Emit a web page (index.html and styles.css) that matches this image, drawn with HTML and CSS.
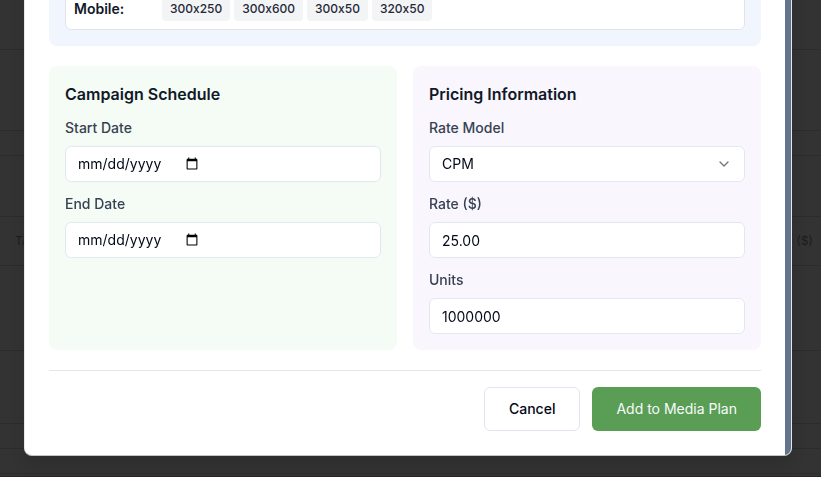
FILE: index.html
```html
<!DOCTYPE html>
<html lang="en">
<head>
<meta charset="utf-8">
<meta name="viewport" content="width=device-width, initial-scale=1">
<title>Add to Media Plan</title>
<link rel="stylesheet" href="styles.css">
</head>
<body>
<div class="page" aria-hidden="true">
  <div class="row row-first"></div>
  <div class="row row-tall"></div>
  <div class="row row-strip"></div>
  <div class="row row-gap"></div>
  <div class="row row-head"><span>TA</span><span>($)</span></div>
  <div class="row row-body"></div>
  <div class="row row-foot"></div>
  <div class="row row-strip"></div>
  <div class="row row-strip"></div>
  <div class="row row-last"></div>
</div>

<div class="overlay">
  <div class="modal" role="dialog" aria-label="Add to Media Plan">
    <form class="content">
      <section class="panel panel-blue">
        <div class="sizes">
          <span class="device">Mobile:</span>
          <ul class="chips">
            <li>300x250</li>
            <li>300x600</li>
            <li>300x50</li>
            <li>320x50</li>
          </ul>
        </div>
      </section>

      <div class="columns">
        <section class="panel panel-green">
          <h2>Campaign Schedule</h2>
          <div class="field">
            <label for="start">Start Date</label>
            <input class="control" id="start" type="date">
          </div>
          <div class="field">
            <label for="end">End Date</label>
            <input class="control" id="end" type="date">
          </div>
        </section>
        <section class="panel panel-purple">
          <h2>Pricing Information</h2>
          <div class="field">
            <label for="model">Rate Model</label>
            <div class="select">
              <select class="control" id="model"><option>CPM</option></select>
              <svg class="chevron" viewBox="0 0 24 24" width="16" height="16" aria-hidden="true"><path d="m6 9 6 6 6-6"/></svg>
            </div>
          </div>
          <div class="field">
            <label for="rate">Rate ($)</label>
            <input class="control" id="rate" type="number" step="0.01" value="25.00">
          </div>
          <div class="field">
            <label for="units">Units</label>
            <input class="control" id="units" type="number" value="1000000">
          </div>
        </section>
      </div>

      <div class="actions">
        <button class="btn" type="button">Cancel</button>
        <button class="btn btn-primary" type="submit">Add to Media Plan</button>
      </div>
    </form>
    <div class="scrollbar"></div>
  </div>
</div>
</body>
</html>
```
FILE: styles.css
```css
* { box-sizing: border-box; }

body {
  margin: 0;
  height: 100vh;
  overflow: hidden;
  background: #333333;
  color: #020817;
  font-family: Inter, "Liberation Sans", sans-serif;
  font-size: 14px;
  line-height: 20px;
}

.page { display: flex; flex-direction: column; }
.row { border-bottom: 1px solid #2c2c2c; }
.row-first { height: 50px; }
.row-tall { height: 81px; }
.row-strip { height: 25px; }
.row-gap { height: 61px; }
.row-head {
  height: 49px;
  display: flex;
  align-items: center;
  justify-content: space-between;
  padding: 0 8px 0 15px;
  color: #1c1d20;
  font-size: 12px;
}
.row-body { height: 85px; }
.row-foot { height: 73px; }
.row-last { height: 3px; border-color: #2f2023; }

.overlay {
  position: fixed;
  inset: 0;
  display: flex;
  align-items: flex-end;
  padding: 0 29px 21px 24px;
}
.modal {
  flex: 1;
  display: flex;
  overflow: hidden;
  background: #ffffff;
  border: 1px solid #e2e8f0;
  border-bottom-color: #c4c4c4;
  border-radius: 8px;
  box-shadow: 0 10px 15px rgba(0, 0, 0, 0.1);
}
.scrollbar { width: 6px; background: #64748b; }
.content {
  flex: 1;
  display: flex;
  flex-direction: column;
  gap: 20px;
  padding: 24px;
}

.panel {
  display: flex;
  flex-direction: column;
  gap: 12px;
  padding: 16px;
  border-radius: 8px;
}
.panel-blue { background: #f0f5fe; }
.panel-green { background: #f4fcf5; }
.panel-purple { background: #f9f6fe; }

.sizes {
  display: flex;
  align-items: center;
  gap: 8px;
  padding: 8px;
  background: #ffffff;
  border: 1px solid #e2e4ea;
  border-radius: 6px;
}
.device { width: 80px; font-weight: 600; color: #111827; }
.chips {
  display: flex;
  gap: 4px;
  margin: 0;
  padding: 0;
  list-style: none;
}
.chips li {
  padding: 2px 8px;
  background: #f3f4f6;
  border-radius: 4px;
  color: #1f2937;
  font-size: 12px;
  font-weight: 500;
  font-variant-ligatures: no-contextual;
}

.columns {
  display: grid;
  grid-template-columns: 1fr 1fr;
  gap: 16px;
}
h2 {
  margin: 0;
  color: #111827;
  font-size: 16px;
  font-weight: 600;
  line-height: 24px;
}
.field { display: flex; flex-direction: column; gap: 8px; }
label { color: #374151; font-weight: 500; }

.control {
  display: flex;
  width: 100%;
  height: 36px;
  margin: 0;
  padding: 0 12px;
  background: #ffffff;
  border: 1px solid #e2e8f0;
  border-radius: 6px;
  color: #020817;
  font: inherit;
  appearance: none;
}
.control::-webkit-inner-spin-button { display: none; }
.control::-webkit-datetime-edit { flex: none; }
.control::-webkit-datetime-edit-month-field,
.control::-webkit-datetime-edit-day-field,
.control::-webkit-datetime-edit-year-field { padding: 0; }
.control::-webkit-calendar-picker-indicator { margin-left: -3px; }
.select { display: grid; align-items: center; }
.select > * { grid-area: 1 / 1; }
.chevron {
  justify-self: end;
  margin-right: 13px;
  fill: none;
  stroke: #73767d;
  stroke-width: 2;
  stroke-linecap: round;
  stroke-linejoin: round;
  pointer-events: none;
}

.actions {
  display: flex;
  justify-content: flex-end;
  gap: 12px;
  padding-top: 16px;
  border-top: 1px solid #e5e7eb;
}
.btn {
  height: 44px;
  padding: 0 24px;
  background: #ffffff;
  border: 1px solid #e2e4f0;
  border-radius: 6px;
  color: #020817;
  font: inherit;
  font-weight: 500;
}
.btn-primary { background: #5a9e56; border: 0; color: #f8fafc; font-weight: 400; }
```
